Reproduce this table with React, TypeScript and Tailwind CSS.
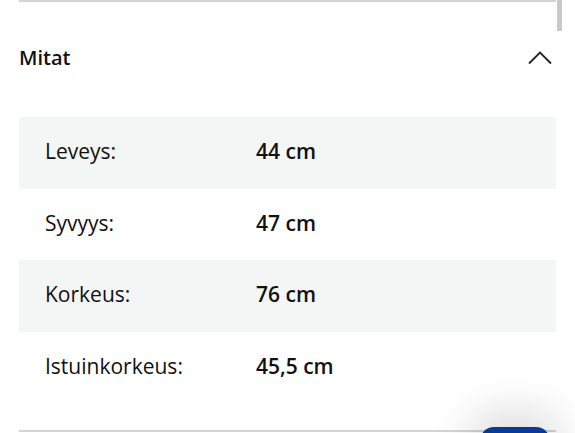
import React from 'react';

const rows = [
  { label: 'Leveys:', value: '44 cm' },
  { label: 'Syvyys:', value: '47 cm' },
  { label: 'Korkeus:', value: '76 cm' },
  { label: 'Istuinkorkeus:', value: '45,5 cm' },
];

function App() {
  return (
    <div className="relative h-[433px] w-[575px] overflow-hidden bg-white font-['Open_Sans',sans-serif] text-[#111]">
      {/* scrollbar thumb */}
      <div className="absolute right-[13px] top-0 h-[31px] w-[5px] bg-[#c9c9c9]" />

      <div className="ml-[19px] w-[537px]">
        <div className="h-[2px] bg-[#d4d4d4]" />

        <div className="flex h-[115px] items-center justify-between pb-[3px]">
          <h2 className="text-[20px] font-semibold">Mitat</h2>
          <svg width="24" height="14" viewBox="0 0 24 14" className="mr-[4px]" fill="none">
            <path d="M1 12.5 L12 1.5 L23 12.5" stroke="#222" strokeWidth="1.8" />
          </svg>
        </div>

        <div>
          {rows.map((r, i) => (
            <div
              key={r.label}
              className={`flex h-[71.5px] items-center pb-[2px] text-[21px] ${i % 2 === 0 ? 'bg-[#f4f5f5]' : 'bg-white'}`}
            >
              <span className="w-[237px] pl-[26px]">{r.label}</span>
              <span className="font-semibold">{r.value}</span>
            </div>
          ))}
        </div>

        <div className="mt-[27px] h-[2px] bg-[#d4d4d4]" />
      </div>

      {/* floating button */}
      <div className="absolute left-[480px] top-[427px] h-[40px] w-[70px] rounded-[14px] bg-[#0a3a94] shadow-[0_-6px_40px_12px_rgba(0,0,0,0.12)]" />
    </div>
  );
}

export default App;
